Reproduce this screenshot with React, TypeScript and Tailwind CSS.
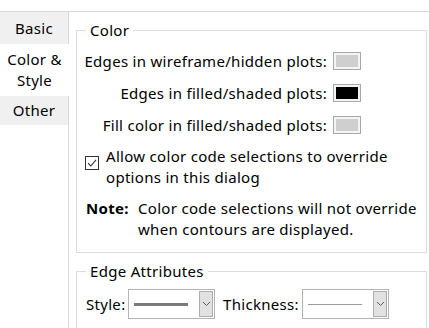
import React from "react";

const font = { fontFamily: '"Noto Sans", "Open Sans", Arial, sans-serif', letterSpacing: "0.3px" };

function Swatch({ color }: { color: string }) {
  return (
    <div className="w-[28px] h-[18px] border border-[#a8a8a8] p-[2px] bg-[#f4f4f4] shrink-0">
      <div className="w-full h-full" style={{ background: color }} />
    </div>
  );
}

function Combo({ thick }: { thick: boolean }) {
  return (
    <div className="w-[87px] h-[30px] border border-[#b4b4b4] bg-white flex items-center pl-[5px] pr-[1px] shrink-0">
      <div className={`w-[54px] ${thick ? "h-[3px] bg-[#7a7a7a]" : "h-px bg-[#9a9a9a]"}`} />
      <div className="flex-1" />
      <div className="w-[14px] h-[26px] bg-[#e1e1e1] border border-[#adadad] flex items-center justify-center">
        <svg width="9" height="6" viewBox="0 0 9 6">
          <path d="M1 1 L4.5 4.5 L8 1" fill="none" stroke="#606060" strokeWidth="1" />
        </svg>
      </div>
    </div>
  );
}

export default function App() {
  return (
    <div className="w-[429px] h-[328px] overflow-hidden bg-white text-[15px] text-black" style={font}>
      <div className="h-[11px] overflow-hidden">
        <div className="mt-[-20px] pl-[14px] leading-[20px] whitespace-nowrap text-[#444]">
          Edge display settings for group properties
        </div>
      </div>
      <div className="flex">
        <div className="w-[68px] shrink-0 flex flex-col">
          <div className="h-[33px] bg-[#f0f0f0] border-t border-[#d9d9d9] flex items-center justify-center leading-none pt-[1px]">
            Basic
          </div>
          <div className="relative z-10 mr-[-1px] h-[52px] bg-white flex flex-col items-center justify-center leading-[21px]">
            <span>Color &amp;</span>
            <span>Style</span>
          </div>
          <div className="h-[29px] bg-[#f0f0f0] flex items-center justify-center leading-none">
            Other
          </div>
        </div>
        <div className="flex-1 border-l border-t border-[#d9d9d9] h-[400px] pl-[7px] pt-[9px] flex flex-col gap-[9px]">
          <fieldset className="w-[351px] border border-[#dcdcdc] pb-[12px]">
            <legend className="ml-[9px] px-[4px] leading-[18px]">Color</legend>
            <div className="w-[284px] flex flex-col items-end mt-[6px]">
              {[
                ["Edges in wireframe/hidden plots:", "#cfcfcf"],
                ["Edges in filled/shaded plots:", "#000000"],
                ["Fill color in filled/shaded plots:", "#cfcfcf"],
              ].map(([label, c]) => (
                <div key={label} className="h-[32px] flex items-center gap-[6px]">
                  <span className="whitespace-nowrap">{label}</span>
                  <Swatch color={c} />
                </div>
              ))}
            </div>
            <div className="flex items-start gap-[7px] ml-[8px] mt-[5px] leading-[21px]">
              <div className="w-[14px] h-[14px] border border-[#333] bg-white flex items-center justify-center shrink-0 mt-[10px]">
                <svg width="12" height="12" viewBox="0 0 12 12">
                  <path d="M2 6.2 L4.8 9 L10 2.8" fill="none" stroke="#333" strokeWidth="1.1" />
                </svg>
              </div>
              <div>
                <div className="whitespace-nowrap">Allow color code selections to override</div>
                <div>options in this dialog</div>
              </div>
            </div>
            <div className="flex ml-[9px] mt-[10px] leading-[21px]">
              <span className="font-bold w-[52px] shrink-0">Note:</span>
              <div>
                <div className="whitespace-nowrap">Color code selections will not override</div>
                <div>when contours are displayed.</div>
              </div>
            </div>
          </fieldset>
          <fieldset className="w-[351px] border border-[#dcdcdc] pb-[11px]">
            <legend className="ml-[9px] px-[4px] leading-[18px]">Edge Attributes</legend>
            <div className="flex items-center ml-[9px] mt-[9px]">
              <span className="w-[42px] shrink-0">Style:</span>
              <Combo thick />
              <span className="ml-[8px] w-[79px] shrink-0">Thickness:</span>
              <Combo thick={false} />
            </div>
          </fieldset>
        </div>
      </div>
    </div>
  );
}
